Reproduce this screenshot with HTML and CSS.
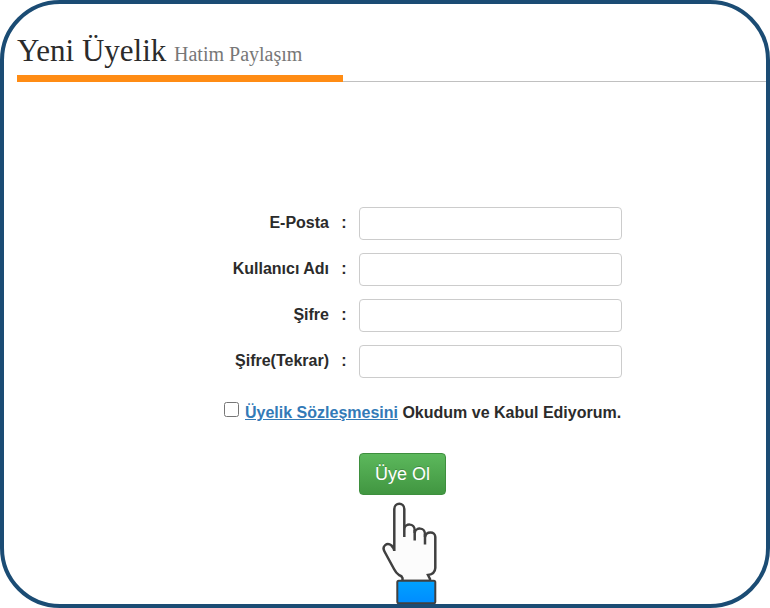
FILE: index.html
```html
<!DOCTYPE html>
<html lang="tr">
    <head>
        <meta charset="utf-8">
        <meta name="viewport" content="width=device-width, initial-scale=1.0">
        <title>Yeni Üyelik</title>
        <link rel="stylesheet" href="styles.css">
    </head>
    <body>
        <div class="frame">
            <div class="page-header">
                <h1>Yeni Üyelik <small>Hatim Paylaşım</small></h1>
            </div>

            <form class="signup">
                <div class="row">
                    <label for="email">E-Posta</label>
                    <span class="colon">:</span>
                    <input class="field" type="email" id="email">
                </div>
                <div class="row">
                    <label for="username">Kullanıcı Adı</label>
                    <span class="colon">:</span>
                    <input class="field" type="text" id="username">
                </div>
                <div class="row">
                    <label for="password">Şifre</label>
                    <span class="colon">:</span>
                    <input class="field" type="password" id="password">
                </div>
                <div class="row">
                    <label for="password2">Şifre(Tekrar)</label>
                    <span class="colon">:</span>
                    <input class="field" type="password" id="password2">
                </div>

                <div class="agreement">
                    <input type="checkbox" id="agree">
                    <label for="agree"><a href="#">Üyelik Sözleşmesini</a> Okudum ve Kabul Ediyorum.</label>
                </div>

                <div class="actions">
                    <button type="submit" class="btn">Üye Ol</button>
                    <svg class="hand" width="60" height="102" viewBox="0 0 60 102" aria-hidden="true">
                        <defs>
                            <linearGradient id="cuff" x1="0" y1="0" x2="0" y2="1">
                                <stop offset="0" stop-color="#00a2ff"/>
                                <stop offset="1" stop-color="#008cff"/>
                            </linearGradient>
                        </defs>
                        <path class="skin" d="M22.500 79 V76 Q22 74 19 73 Q16 71 14 67 L4.500 49.500 C1.500 44 7 40 11.500 43.500 Q14 46 14.300 49 V7 C14.300 0 24.300 0 24.300 7 V27 C25 21 34.700 21 34.700 28 V31 C35.500 25 45 25 45 32 V35 C46 29 55.300 29 55.300 35 V66 Q55 72 48 73 L50 77 V79 Z"/>
                        <path class="line" d="M24.300 27 V35 M34.700 28 V38.500 M45 32 V42.500"/>
                        <rect class="cuff" x="17.300" y="78.800" width="38" height="22.500" rx="1.500" fill="url(#cuff)"/>
                    </svg>
                </div>
            </form>
        </div>
    </body>
</html>
```
FILE: styles.css
```css
* {
    box-sizing: border-box;
}

body {
    margin: 0;
    background: white;
    color: #2b2b2b;
    font-family: "Liberation Sans", Arial, sans-serif;
    font-size: 16px;
    line-height: 20px;
}

.frame {
    min-height: 100vh;
    padding-left: 13px;
    border: 4px solid #1b4c74;
    border-radius: 60px;
    overflow: hidden;
}

.page-header {
    padding-top: 27px;
    border-bottom: 1px solid #c0c0c0;
}

.page-header h1 {
    width: 326px;
    margin: 0 0 -1px;
    padding-bottom: 4px;
    border-bottom: 7px solid #ff8c14;
    font-family: "Liberation Serif", "Times New Roman", serif;
    font-size: 31px;
    font-weight: normal;
    line-height: 40px;
    white-space: nowrap;
}

.page-header small {
    color: #777;
    font-size: 20px;
    line-height: 20px;
}

.signup {
    width: 477px;
    margin: 125px auto 0;
    padding-left: 58px;
}

.row {
    display: grid;
    grid-template-columns: 118px 30px 263px;
    margin-bottom: 13px;
    font-weight: bold;
}

.row label {
    padding-top: 6px;
    text-align: right;
}

.colon {
    padding-top: 6px;
    text-align: center;
}

.field {
    height: 33px;
    padding: 4px 8px;
    border: 1px solid #ccc;
    border-radius: 4px;
    background: white;
    font: inherit;
    font-weight: normal;
}

.agreement {
    display: flex;
    align-items: flex-start;
    gap: 6px;
    margin-left: 13px;
    padding-top: 11px;
    font-weight: bold;
    white-space: nowrap;
}

.agreement input {
    width: 15px;
    height: 15px;
    margin: 0;
}

.agreement label {
    padding-top: 1px;
}

.agreement a {
    color: #337ab7;
    text-decoration: underline;
}

.actions {
    display: flex;
    flex-direction: column;
    align-items: flex-start;
    gap: 7px;
    margin: 30px 0 0 148px;
}

.btn {
    height: 42px;
    padding: 0 15px;
    border: 1px solid #3e8f3e;
    border-radius: 4px;
    background: linear-gradient(#5cb85c, #419641);
    color: white;
    font-family: inherit;
    font-size: 18px;
    text-shadow: 0 -1px 0 rgba(0, 0, 0, .2);
    cursor: pointer;
}

.hand {
    display: block;
    margin-left: 21px;
}

.skin {
    fill: #fcfcfc;
    stroke: #404040;
    stroke-width: 2.500px;
}

.line {
    fill: none;
    stroke: #404040;
    stroke-width: 2.500px;
}

.cuff {
    stroke: #404040;
    stroke-width: 2px;
}
```
